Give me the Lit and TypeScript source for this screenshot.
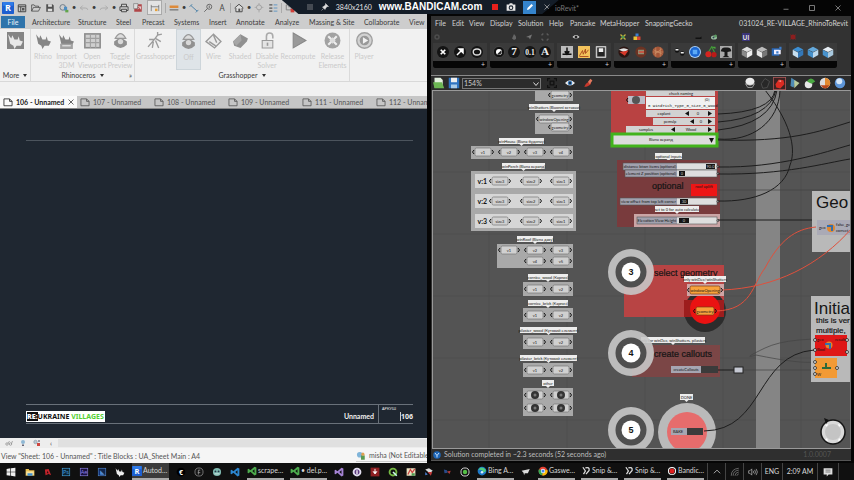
import { LitElement, html, svg, css } from "lit";
import { customElement } from "lit/decorators.js";

/* Icons are drawn on a 16 x 16 grid. */
const ball = (c: string, d = svg``) =>
  svg`<circle cx="8" cy="8" r="7.4" fill="#111" stroke="#555" stroke-width=".8"/><circle cx="8" cy="8" r="4" fill=${c}/>${d}`;
const chip = (bg: string, fg: string, label: string) =>
  svg`<rect x="2" y="2" width="12" height="12" fill=${bg} stroke=${fg}/><text x="8" y="11.5" font-size="9" text-anchor="middle" fill=${fg}>${label}</text>`;
const letter = (label: string, size = 13) =>
  svg`<circle cx="8" cy="8" r="8" fill="#161616"/><text x="8" y="12.5" font-size=${size} font-weight="bold" font-family="Liberation Serif, serif" text-anchor="middle" fill="#eee">${label}</text>`;
const cube = (top: string, l: string, r: string) =>
  svg`<path d="M8 1l7 3.5L8 8 1 4.500z" fill=${top}/><path d="M1 5l7 3.500V16l-7-4z" fill=${l}/><path d="M15 5L8 8.500V16l7-4z" fill=${r}/>`;
const doc = svg`<path d="M1.500 3h9l4 4v7h-13zM10.500 3v4h4" fill="none" stroke="currentColor" stroke-width="1.300"/>`;
const rhinoShape = svg`<path d="M1 2l3 4 1-3 2 4 3 0 1-3 1 4 3 1-2 4-4 0-2 3-1-3-3-2z" fill="currentColor"/>`;
const vs = (c: string) =>
  svg`<path d="M12 1l3 1.500v11L12 15 5.500 9.300 2.500 11.700 1 11V5l1.500-.7 3 2.400zM12 5L8.500 8 12 11z" fill=${c}/>`;

const I: Record<string, unknown> = {
  revit: svg`<rect width="16" height="16" rx="1" fill="#1d5fd0"/><path d="M1 0h14v5H1z" fill="#2f7be8"/><text x="8" y="12.500" font-size="12" font-weight="bold" text-anchor="middle" fill="#fff">R</text>`,
  panel: svg`<path d="M2 3h12v11H2zM2 6h12M6 6v8" fill="none" stroke="#444" stroke-width="1.600"/><path d="M8 8h4v4H8z" fill="#555"/>`,
  open: svg`<path d="M1 13V3h4l1.500 2H12v2M1 13l3-6h11l-3 6z" fill="none" stroke="#444" stroke-width="1.200"/>`,
  save: svg`<path d="M2 2h10l2 2v10H2z" fill="#505050"/><path d="M5 2h6v4H5zM4.500 9h7v4h-7z" fill="#ddd"/>`,
  sync: svg`<circle cx="6" cy="7" r="4.500" fill="none" stroke="#6d7b86" stroke-width="1.500"/><path d="M8 6h5v6H8z" fill="#4d8ec4"/><path d="M10 11h5v4h-5z" fill="#63a54c"/>`,
  undo: svg`<path d="M6 4L2 8l4 3M2 8h8q4 0 4 3" fill="none" stroke="#aaa" stroke-width="1.500"/>`,
  redo: svg`<path d="M10 4l4 4-4 3M14 8H6q-4 0-4 3" fill="none" stroke="#aaa" stroke-width="1.500"/>`,
  print: svg`<path d="M4 6V2h8v4M4 12H1.500V6h13v6H12M4 10h8v4H4z" fill="#cfcfcf" stroke="#444" stroke-width="1.500"/>`,
  pdf: svg`<path d="M2 2h12v12H2z" fill="#b04648"/><path d="M1 1h7l-1 8H1z" fill="#ddd" stroke="#777"/><path d="M8 10l4-4M12 10V6H8" stroke="#fff" fill="none"/>`,
  aligned: svg`<path d="M2 3v10M14 3v10M2 6h12" stroke="#555" fill="none"/><rect x="8" y="9" width="4" height="4" fill="#e6a13b"/>`,
  measure: svg`<rect x="1" y="4" width="14" height="4" fill="#dd8a3a"/><path d="M1 11h14" stroke="#555" stroke-width="1.500"/>`,
  diag: svg`<path d="M3 4l10 9M1 6l4-4M11 15l4-4" stroke="#4a80a8" stroke-width="1.500"/>`,
  tag: svg`<circle cx="10" cy="6" r="4" fill="none" stroke="#555" stroke-width="1.300"/><path d="M7 9l-5 5M10 4v4" stroke="#555" stroke-width="1.300"/>`,
  letterA: svg`<text x="8" y="13" font-size="13" text-anchor="middle" fill="#444">A</text>`,
  house: svg`<path d="M1 8l7-6 7 6M3 8v6h10V8" fill="#ddd" stroke="#444" stroke-width="1.500"/><path d="M7 9h3v5H7z" fill="#555"/>`,
  section: svg`<circle cx="8" cy="7" r="4" fill="none" stroke="#999" stroke-width="1.300"/><path d="M8 0v3M8 11v4M1 7h3M12 7h3" stroke="#999"/>`,
  list: svg`<path d="M2 3h5M2 8h5M2 13h5" stroke="#555" stroke-width="2"/><path d="M9 3h6M9 8h6M9 13h6" stroke="#4d8ec4" stroke-width="1.300"/>`,
  close3: svg`<path d="M2 3h8v8H2zM5 6h8v8" fill="none" stroke="#777" stroke-width="1.300"/><path d="M9 9h6v6H9z" fill="#d2403a"/>`,
  rhino: rhinoShape,
  more: svg`<rect width="16" height="16" fill="#858585"/><g color="#e8e8e8">${rhinoShape}</g>`,
  import3: svg`<g color="#858585">${rhinoShape}</g><path d="M2 11h12v5H2z" fill="#a2a2a2"/><path d="M4 13h8" stroke="#eee"/>`,
  viewport: svg`<rect x=".8" y="1.800" width="14.400" height="13" fill="#cfcfcf" stroke="#8d8d8d" stroke-width="1.500"/><path d="M6 2v13M11 2v13M1 6h14M1 10h14" stroke="#a0a0a0"/>`,
  toggle: svg`<path d="M3 6q5-9 10 0z" fill="#ddd" stroke="#999"/><path d="M2 9q6-6 12 0v3q-6 6-12 0z" fill="#909090"/><circle cx="8" cy="9" r="2.500" fill="#d8d8d8"/>`,
  hopper: svg`<path d="M1 14l6-7 3-4 4-1M7 7l-5 0M8 6l5 3M8 8l3 7M6 9l-1 6M10 3l0-3" stroke="#9c9c9c" stroke-width="1.300" fill="none"/>`,
  wire: svg`<path d="M1 9l7-7 7 7-6 6zM4 9l6 4M8 3l3 7" fill="#ececec" stroke="#999" stroke-width="1.300"/>`,
  shaded: svg`<path d="M1 9l7-7 7 4-1 3-6 6-6-2z" fill="#909090"/><path d="M1 9l7-7 1 6-5 5z" fill="#a6a6a6"/>`,
  lock: svg`<path d="M7 8V4q0-3 3-3t3 3v2" fill="none" stroke="#aaa" stroke-width="1.500"/><path d="M3 8h10v7H3z" fill="#e4e4e4" stroke="#999"/><path d="M8 10v3" stroke="#999" stroke-width="1.500"/>`,
  recompute: svg`<path d="M3 1l12 7-12 7z" fill="#999" stroke="#888"/>`,
  release: svg`<circle cx="8" cy="8" r="7.500" fill="#a2a2a2"/><path d="M4 4l8 8M12 4l-8 8" stroke="#eee" stroke-width="2"/><path d="M5 8l3-3 3 3-3 3z" fill="#ddd"/>`,
  player: svg`<circle cx="8" cy="8" r="7.300" fill="#d2d2d2" stroke="#a0a0a0" stroke-width="1.300"/><circle cx="8" cy="8" r="4.500" fill="#999"/><path d="M6.500 5l5 3-5 3z" fill="#f2f2f2"/>`,
  doc,
  glasses: svg`<circle cx="4" cy="10" r="2.500" fill="none" stroke="#666"/><circle cx="11" cy="10" r="2.500" fill="none" stroke="#666"/><path d="M6 9l3-5M13 9l2-5" stroke="#666"/>`,
  bulb: svg`<circle cx="8" cy="6" r="4" fill="#8fb8d4"/><path d="M6 11h4v3H6z" fill="#667"/>`,
  worksets: svg`<circle cx="5" cy="6" r="3.500" fill="#b9c8d2" stroke="#789"/><path d="M8 8h6v6H8z" fill="#cf4640"/><path d="M10 2h4v4h-4z" fill="#99a"/>`,
  userset: svg`<circle cx="6" cy="6" r="4.500" fill="#7fb4d9"/><path d="M8 7h6v7H8z" fill="#5a9a50"/><circle cx="11" cy="5" r="2.500" fill="#e0a050"/>`,
  gear: svg`<circle cx="8" cy="8" r="4" fill="none" stroke="#4c4c4c" stroke-width="3"/>`,
  flame: svg`<path d="M8 2l4 5v5l-4 2-4-3z" fill="#666"/>`,
  arrowUp: svg`<path d="M2 8l12-5-4 10-2-4z" fill="#777"/>`,
  frame: svg`<path d="M2 5V2h3M11 2h3v3M14 11v3h-3M5 14H2v-3" fill="none" stroke="#777" stroke-width="1.500"/>`,
  eye: svg`<path d="M1 8q7-8 14 0-7 7-14 0z" fill="#ddd"/><circle cx="8" cy="8" r="3" fill="#222"/>`,
  eyeBlue: svg`<path d="M0 8q8-9 16 0-8 8-16 0z" fill="#eee"/><circle cx="8" cy="8" r="3.600" fill="#3a78b8"/><circle cx="8" cy="8" r="1.500" fill="#111"/>`,
  bug: svg`<path d="M3 3l10 10M13 3L3 13" stroke="#c8b43c" stroke-width="2.500"/><circle cx="8" cy="8" r="3" fill="#4f9c52"/>`,
  blocks: svg`<path d="M5 1h6v6H5z" fill="#3c7ed0"/><path d="M1 7h7v7H1z" fill="#e8c236"/><path d="M8 7h7v7H8z" fill="#d64533"/>`,
  dash: svg`<path d="M1 9h9l3-2v5H1z" fill="#111"/>`,
  frog: svg`<ellipse cx="8" cy="9" rx="6" ry="4" fill="#9ec4a5"/><circle cx="11" cy="6" r="3" fill="#5d9a62"/><circle cx="7" cy="9" r="2" fill="#345"/>`,
  ui: svg`<rect width="16" height="16" fill="#3a3478"/><text x="8" y="13" font-size="13" font-weight="bold" text-anchor="middle" fill="#ddd">UI</text>`,
  redbug: svg`<circle cx="8" cy="8" r="5" fill="#8c1f1f"/><path d="M2 3l12 10M14 3L2 13" stroke="#8c1f1f" stroke-width="1.500"/>`,
  cross: svg`<circle cx="8" cy="8" r="8" fill="#141414"/><path d="M5 5l6 6M11 5l-6 6" stroke="#fff" stroke-width="2.300"/>`,
  slash: svg`<circle cx="8" cy="8" r="8" fill="#141414"/><path d="M4 12l5-5M7 4h5v5z" stroke="#fff" stroke-width="2" fill="#fff"/>`,
  ring: svg`<circle cx="8" cy="8" r="8" fill="#141414"/><ellipse cx="8" cy="8" rx="5" ry="4" fill="none" stroke="#ddd" stroke-width="1.800"/>`,
  yin: ball("#fff", svg`<path d="M11 5.500a4 4 0 01-5.500 5.500z" fill="#222"/>`),
  seven: letter("7", 15),
  digits: letter("0.1", 10),
  bigA: letter("A", 15),
  slider: svg`<rect width="16" height="16" fill="#bbb"/><path d="M2 11h12M8 2v8M5 7l3 4 3-4" stroke="#111" stroke-width="2" fill="#111"/>`,
  graph: svg`<rect width="16" height="16" fill="#f3c35c"/><path d="M2 13L6 6l1 5 3-7 0 6 4-5M2 14h12" stroke="#a8481c" stroke-width="1.200" fill="none"/>`,
  switch: svg`<rect x="1" width="14" height="16" rx="1" fill="#c4c4c4"/><rect x="3" y="2" width="10" height="12" fill="#222"/><rect x="5" y="3" width="6" height="5" fill="#eee"/>`,
  orb1: svg`<circle cx="8" cy="8" r="7.500" fill="#2a1512"/><path d="M1 5q7-4 13 0L8 8z" fill="#e2e2e2"/><path d="M2 8l12-2-5 7z" fill="#d8392a"/>`,
  orb2: svg`<circle cx="8" cy="8" r="7.500" fill="#6b3323"/><path d="M4 5h8v6H4z" fill="#8e8e72"/><path d="M5 7h7v2H5z" fill="#d6483a"/>`,
  orb3: svg`<circle cx="8" cy="8" r="7.500" fill="#a45638"/><path d="M2 5l12 6M3 11l10-7M5 2v12M11 2v12M1 8h14" stroke="#d9a274" stroke-width=".7"/>`,
  ant: svg`<circle cx="4" cy="6" r="3" fill="#111"/><circle cx="11" cy="10" r="3" fill="#111"/><path d="M2 5h4M9 9h4" stroke="#eee" stroke-width="2"/>`,
  blue: svg`<circle cx="8" cy="8" r="8" fill="#a9cdf4"/><circle cx="8" cy="8" r="6.700" fill="#1b66cf"/><path d="M5 5h6v6H5z" fill="#5caaf6"/>`,
  cherry: svg`<path d="M4 9l5-8 4 8" stroke="#3f9a35" stroke-width="1.500" fill="none"/><circle cx="4.500" cy="11" r="4" fill="#d6241f"/><circle cx="12" cy="11.500" r="3.500" fill="#bb1a18"/><path d="M8 1h6v3z" fill="#4aa83c"/>`,
  tree: svg`<rect width="16" height="16" fill="#aaa"/><path d="M1 7q1-6 7-5 7-1 7 5l-5 1v5l3 2H3l3-2V8z" fill="#1b1b1b"/>`,
  cubeG: cube("#ddd", "#8a8a8a", "#eee"),
  cubeH: cube("#bbb", "#e6e6e6", "#777"),
  plug: svg`<path d="M1 3h10v10H1z" fill="#2a67b6"/><path d="M4 5h9v6H4z" fill="#eef"/><path d="M7 7h3v3H7zM11 1h3v4h-3z" fill="#3d7ecc"/>`,
  cubeB: cube("#3c8fd4", "#c7dff0", "#3478b8"),
  cubeC: cube("#64a9dc", "#4590ca", "#bcd9ee"),
  cubeD: cube("#e7eef4", "#4892cd", "#a9c9df"),
  folder: svg`<path d="M2 1h8l3 3v10H2z" fill="#e4f1df"/><path d="M0 7h12l3 8H2z" fill="#6cb653"/>`,
  disk: svg`<path d="M1 1h14v14H1z" fill="#2f74c2"/><path d="M4 1h8v6H4z" fill="#eee"/><path d="M4 10h8v5H4z" fill="#a9cbe9"/>`,
  target: svg`<path d="M1 5V1h4M11 1h4v4M15 11v4h-4M5 15H1v-4M5 5h6v6H5z" fill="none" stroke="#111" stroke-width="2"/>`,
  pen: svg`<path d="M2 14q2-6 7-8l4 3q-4 5-11 5z" fill="#c8382c"/><path d="M8 6l4-5 3 3-4 6z" fill="#e0795f"/>`,
  pot: svg`<ellipse cx="8" cy="6" rx="6" ry="5" fill="#ececec"/><path d="M2 9q6 4 12 0l-3 5H5z" fill="#333" stroke="#bbb"/>`,
  dark: svg`<path d="M3 9l5-7 6 4-3 8-6 1z" fill="#272727" stroke="#555"/>`,
  gem: svg`<rect x=".5" y=".5" width="15" height="15" fill="#3c2222" stroke="#a55"/><path d="M3 9l4-6 6 1 1 5-5 5-5-1z" fill="#dc2b22"/><path d="M6 5l4-1 0 2z" fill="#f4a29a"/>`,
  spear: svg`<path d="M3 1l6 4-3 9-4-2z" fill="#4e8bb4"/><path d="M7 4l7 4-7 7z" fill="#b9cc9b"/>`,
  half: svg`<circle cx="6" cy="10" r="5" fill="#e6e6e6"/><path d="M4 6q5-8 11 0l-5 3z" fill="#4aa842"/>`,
  orange: svg`<circle cx="8" cy="8" r="7" fill="#dedede"/><path d="M8 1a7 7 0 010 14z" fill="#e28a2f"/><path d="M2 11h12l-4 4H6z" fill="#b8481c"/>`,
  sphere: svg`<circle cx="8" cy="8" r="7" fill="#5d95d8"/><circle cx="7" cy="5.500" r="4" fill="#d5e6f8"/>`,
  windows: svg`<path d="M1 3l6-1v5.500H1zM8 1.800L15 1v6.500H8zM1 8.500h6V14l-6-1zM8 8.500h7V15l-7-1z" fill="#eee"/>`,
  files: svg`<path d="M1 3h5l1 2h8v9H1z" fill="#e9bf4f"/><path d="M2 7h12v6H2z" fill="#f6e3a0"/><path d="M4 10h8v4H4z" fill="#4390cf"/>`,
  acad: svg`<path d="M3 4l6-1 4 10-4-2-5 2z" fill="#c3242c"/><path d="M7 6l2 4H6z" fill="#2a0d0d"/>`,
  ps: chip("#0b2333", "#45a4e0", "Ps"),
  ae: chip("#1a1040", "#8d84e8", "Ae"),
  lumion: chip("#10264e", "#4f86d0", "◣"),
  rhinoW: svg`<g color="#eee">${rhinoShape}</g>`,
  c4d: svg`<circle cx="8" cy="8" r="7" fill="#000"/><text x="8" y="12" font-size="11" font-weight="bold" text-anchor="middle" fill="#fff">€</text>`,
  obs: svg`<circle cx="8" cy="8" r="6.500" fill="#151515" stroke="#888" stroke-width="1.300"/><path d="M7 12V5h3M6 9h4" stroke="#999" fill="none" stroke-width="1.300"/>`,
  face: svg`<circle cx="8" cy="8" r="6.500" fill="#7fb9b0"/><circle cx="5.500" cy="7" r="1.500" fill="#234"/><circle cx="10.500" cy="7" r="1.500" fill="#234"/><path d="M4 11h8" stroke="#fff"/>`,
  code: vs("#2b86d0"),
  codeG: vs("#4dac4e"),
  vstudio: vs("#a583d4"),
  github: svg`<circle cx="8" cy="8" r="7" fill="#e2dff0"/><circle cx="8" cy="8" r="4" fill="#5d3c80"/><path d="M7 5h2v6H7z" fill="#fff"/>`,
  redbox: svg`<rect x="1" y="1" width="14" height="14" fill="#8e1f22"/><path d="M8 3v7M5 7l3 4 3-4" stroke="#fff" stroke-width="1.500" fill="#fff"/>`,
  qgis: svg`<circle cx="8" cy="8" r="5.500" fill="none" stroke="#75b843" stroke-width="3"/><path d="M8 8l6 6" stroke="#cfe" stroke-width="2.500"/>`,
  maps: svg`<path d="M1 2h14v12H1z" fill="#e9e2c0"/><path d="M3 12l4-8 3 5 4-6" stroke="#c44" stroke-width="2" fill="none"/><path d="M9 10h5v4H9z" fill="#4d9a50"/>`,
  mix: svg`<path d="M2 4l6-2 6 4-5 4z" fill="#ddd"/><path d="M6 8l7 0-2 6z" fill="#c43a3a"/><path d="M2 8l4 4-4 1z" fill="#4b7fd2"/>`,
  mix2: svg`<path d="M3 4l5 1 1 4-5 1z" fill="#284a8a"/><path d="M8 7l6-1-2 5z" fill="#b23a3a"/>`,
  greenOrb: svg`<circle cx="8" cy="8" r="6.500" fill="#111" stroke="#ddd" stroke-width="1.500"/><circle cx="8" cy="8" r="3.500" fill="#55c146"/>`,
  edge: svg`<circle cx="8" cy="8" r="7" fill="#1c78c8"/><path d="M2 6q5-7 12 0 1 5-5 4 1-5-7-4z" fill="#4fcf7d"/><circle cx="8" cy="10" r="2" fill="#d7eaff"/>`,
  hopperW: svg`<path d="M1 6l13-3-3 7-5 0-1 3-1-4z" fill="#ddd"/>`,
  chrome: svg`<circle cx="8" cy="8" r="7" fill="#e34133"/><path d="M8 8L1.500 5A7 7 0 007 15z" fill="#35a852"/><path d="M8 8l7-2a7 7 0 01-8 9z" fill="#f8bd0c"/><circle cx="8" cy="8" r="3.500" fill="#fff"/><circle cx="8" cy="8" r="2.500" fill="#4084f0"/>`,
  snip: svg`<path d="M3 2l4 6-3 5M7 3q7-2 6 4l-5 6" stroke="#ddd" stroke-width="2" fill="none"/>`,
  rec: svg`<circle cx="8" cy="8" r="6.500" fill="#fff"/><circle cx="8" cy="8" r="5" fill="#222"/><circle cx="8" cy="8" r="4" fill="#e01f1f"/>`,
  chevUp: svg`<path d="M3 10l5-5 5 5" fill="none" stroke="#ccc" stroke-width="1.300"/>`,
  wifi: svg`<path d="M2 14Q2 3 14 2M5 14q0-8 9-9M8 14q0-5 6-6M11 14q0-2 3-3" fill="none" stroke="#777" stroke-width="1.300"/>`,
  volume: svg`<path d="M1 6h2l3-3v10l-3-3H1z" fill="none" stroke="#ccc"/><path d="M8 6q2 2 0 4M10.500 4.500q3 3.500 0 7M13 3q4 5 0 10" fill="none" stroke="#ccc"/>`,
  note: svg`<path d="M1 2h14v10H9l-3 3v-3H1z" fill="#ddd"/><path d="M4 5h8M4 8h8" stroke="#444"/>`,
  menu: svg`<path d="M2 4h12M2 8h12M2 12h12" stroke="#aaa" stroke-width="1.300"/>`,
  pin: svg`<path d="M9 1l6 6-3 0-3 4-1 2-5-5 2-1 4-3zM5 11l-4 4" fill="#ddd" stroke="#ddd"/>`,
  stop: svg`<rect x="2" y="2" width="12" height="12" fill="#e8201c"/>`,
  camera: svg`<path d="M1 4h4l1-2h4l1 2h4v10H1z" fill="#e8e8e8"/><circle cx="8" cy="9" r="3.700" fill="#1a2430"/><circle cx="8" cy="9" r="2" fill="#e8e8e8"/>`,
  pencil: svg`<path d="M2 14l1-4 8-8 3 3-8 8z" fill="#fff"/>`,
  x: svg`<path d="M3 3l10 10M13 3L3 13" stroke="currentColor" stroke-width="1.400"/>`,
  min: svg`<path d="M4 10h8" stroke="#888" stroke-width="1.400"/>`,
  max: svg`<path d="M4 4h8v8H4z" fill="none" stroke="#888" stroke-width="1.400"/>`,
  closeWin: svg`<path d="M4 4l8 8M12 4l-8 8" stroke="#888" stroke-width="1.400"/>`,
  hopBlue: svg`<circle cx="8" cy="8" r="7.500" fill="#1d66b8"/><path d="M4 4l4 5 4-5M8 9v4" stroke="#d9ecff" stroke-width="1.800" fill="none"/>`,
};
const icon = (name: string, size = "s10") =>
  html`<svg class="ic ${size}" viewBox="0 0 16 16" aria-hidden="true">${I[name]}</svg>`;

const base = css`
  * { box-sizing: border-box; }
  button, select, input { font: inherit; color: inherit; background: none; border: 0; padding: 0; margin: 0; }
  button { display: flex; align-items: center; justify-content: center; white-space: nowrap; }
  a { color: inherit; text-decoration: none; }
  .ic { display: block; flex: none; font-family: "Open Sans", sans-serif; }
  .s8 { width: 8px; height: 8px; }
  .s10 { width: 10px; height: 10px; }
  .s12 { width: 12px; height: 12px; }
  .s13 { width: 13px; height: 13px; }
  .s18 { width: 17px; height: 17px; }
`;

@customElement("revit-window")
class RevitWindow extends LitElement {
  static styles = [base, css`
    :host { display: flex; flex-direction: column; min-width: 0; overflow: hidden; background: #f1f1f1; color: #3c3c3c; font: 7px/9px Lato, "Noto Sans", sans-serif; white-space: nowrap; }
    .qat { display: flex; align-items: center; height: 15px; padding-left: 1px; background: #cdcdcd; }
    .qat button { width: 14px; height: 15px; flex: none; }
    .qat .dot { width: 6px; font-size: 8px; }
    .qat .boxed { width: 15px; margin: 0 2px; background: #e3e3e3; border: 1px solid #aaa; }
    .sep { width: 1px; height: 10px; margin: 0 1px; background: #aaa; }
    nav { display: flex; height: 14px; padding-left: 1px; background: #cdcdcd; align-items: center; }
    nav button { flex: none; height: 14px; justify-content: flex-start; }
    nav .file { background: #2f74ab; color: #e8f2fa; width: 24px; height: 12px; justify-content: center; margin-right: 7px; }
    .ribbon { display: flex; height: 53px; border-bottom: 1px solid #d8d8d8; background: #f1f1f1; }
    .group { display: flex; flex-direction: column; border-right: 1px solid #dadada; flex: none; }
    .group:last-child { border: 0; }
    .tools { display: flex; flex: 1; }
    .tools button { flex-direction: column; justify-content: flex-start; padding-top: 3px; gap: 3px; line-height: 9px; color: #cacaca; height: 41px; }
    .tools button .ic { color: #858585; }
    .tools .on { background: #dfe4e8; border: 1px solid #cdd5da; }
    .foot { display: flex; justify-content: center; height: 13px; align-items: center; position: relative; gap: 4px; }
    .foot i { border: 2px solid transparent; border-top: 3px solid #333; border-bottom: 0; }
    .more { position: absolute; right: 2px; }
    .blank { height: 14px; }
    .docs { display: flex; height: 13px; background: #c6c6c6; overflow: hidden; border-bottom: 1px solid #888; }
    .docs button { width: 74px; flex: none; justify-content: flex-start; padding-left: 3px; gap: 3px; color: #555; }
    .docs .on { width: 77px; background: #fafafa; color: #222; font-weight: 700; }
    .docs .x { margin-left: auto; margin-right: 2px; }
    .sheet { flex: 1; background: #1f2731; display: flex; flex-direction: column; padding: 31px 14px 14px 26px; color: #eee; }
    .top { border-top: 1px solid #4c545d; flex: 1; }
    .title { border-top: 1px solid #69717a; border-bottom: 1px solid #69717a; display: flex; height: 20px; align-items: flex-end; font-family: "Noto Sans", sans-serif; }
    .logo { background: #fff; color: #111; font-weight: 700; height: 11px; line-height: 11px; padding: 0 1px; margin-bottom: 1px; }
    .logo b { background: #111; color: #fff; }
    .logo em { font-style: normal; color: #55cf35; }
    .name { margin-left: auto; font-family: Lato, sans-serif; font-weight: 700; padding: 0 4px 2px; }
    .num { border-left: 1px solid #69717a; width: 35px; align-self: stretch; display: flex; flex-direction: column; padding-left: 3px; }
    .num small { font-size: 4px; line-height: 7px; }
    .num b { align-self: flex-end; border-left: 1px solid #ccc; }
    .view { display: flex; height: 10px; align-items: center; background: #ededed; padding-left: 2px; }
    .view button { width: 14px; }
    .view span { flex: 1; height: 8px; background: #e0e0e0; }
    .status { display: flex; height: 15px; align-items: center; padding: 2px 0 0 1px; background: #f5f5f5; color: #555; }
    .user { display: flex; gap: 3px; width: 71px; margin-left: auto; overflow: hidden; border-bottom: 1px solid #ccc; flex: none; }
  `];
  tool(name: string, w: number, lines: string[], on = false) {
    return html`<button class=${on ? "on" : ""} style="width:${w}px">${icon(name, "s18")}<span>${lines.map((l, i) => (i ? html`<br />${l}` : l))}</span></button>`;
  }
  render() {
    const q = ["revit", "panel", "open", "save", "sync", ".", "undo", ".", "redo", ".", "print", "pdf", "#aligned", "|", "measure", ".", "diag", "tag", "letterA", "|", "house", ".", "section", "list", "|", "close3"];
    const tabs: [string, number][] = [["Architecture", 46], ["Structure", 38], ["Steel", 26], ["Precast", 32], ["Systems", 35], ["Insert", 27], ["Annotate", 39], ["Analyze", 34], ["Massing & Site", 55], ["Collaborate", 45], ["View", 20]];
    return html`
      <div class="qat">${q.map((n) => n === "." ? html`<button class="dot" aria-label="Options">•</button>` : n === "|" ? html`<span class="sep"></span>` : html`<button class=${n[0] === "#" ? "boxed" : ""} aria-label=${n}>${icon(n.replace("#", ""), n === "revit" ? "s12" : "s10")}</button>`)}</div>
      <nav><button class="file">File</button>${tabs.map(([t, w]) => html`<button style="width:${w}px">${t}</button>`)}</nav>
      <div class="ribbon">
        <div class="group"><div class="tools">${this.tool("more", 30, [])}</div><div class="foot">More <i></i></div></div>
        <div class="group"><div class="tools">${this.tool("rhino", 24, ["Rhino"])}${this.tool("import3", 23, ["Import", "3DM"])}${this.tool("viewport", 28, ["Open", "Viewport"])}${this.tool("toggle", 28, ["Toggle", "Preview"])}</div><div class="foot">Rhinoceros <i></i><span class="more">»</span></div></div>
        <div class="group"><div class="tools">${this.tool("hopper", 41, ["Grasshopper"])}${this.tool("toggle", 25, ["Off"], true)}${this.tool("wire", 25, ["Wire"])}${this.tool("shaded", 28, ["Shaded"])}${this.tool("lock", 26, ["Disable", "Solver"])}${this.tool("recompute", 36, ["Recompute"])}${this.tool("release", 33, ["Release", "Elements"])}</div><div class="foot">Grasshopper <i></i></div></div>
        <div class="group"><div class="tools">${this.tool("player", 28, ["Player"])}</div></div>
      </div>
      <div class="blank"></div>
      <div class="docs">${["106", "107", "108", "109", "111", "112"].map((n, i) => html`<button class=${i ? "" : "on"}>${icon("doc")}${n} - Unnamed${i ? "" : html`<span class="x">${icon("x", "s8")}</span>`}</button>`)}</div>
      <div class="sheet">
        <div class="top"></div>
        <div class="title"><span class="logo"><b>RE:</b>UKRAINE <em>VILLAGES</em></span><span class="name">Unnamed</span><span class="num"><small>АРКУШ</small><b>106</b></span></div>
      </div>
      <div class="view">${["glasses", "bulb", "worksets"].map((n) => html`<button aria-label=${n}>${icon(n, "s8")}</button>`)}<button aria-label="Scroll left">‹</button><span></span></div>
      <div class="status">View "Sheet: 106 - Unnamed" : Title Blocks : UA_Sheet Main : A4<span class="user">${icon("userset")}misha (Not Editable</span></div>`;
  }
}

/* ---- node canvas ---- */
const pill = (cx: number, y: number, label: string, w = 20, orange = false) => svg`
  <rect x=${cx - w / 2 + 2} y=${y - 4} width=${w - 4} height="8" rx="1.500" fill=${orange ? "#f7a23c" : "#d0d0d0"} stroke=${orange ? "#7a3a10" : "#777"} stroke-width=".7"/>
  <path d="M${cx - w / 2 + 1} ${y - 2}l-1.500 2 1.500 2M${cx + w / 2 - 1} ${y - 2}l1.500 2-1.500 2" fill="none" stroke="#111"/>
  ${label === "●" ? svg`<circle cx=${cx} cy=${y} r="4" fill="#333"/><circle cx=${cx} cy=${y} r="1.500" fill="#777"/>` : svg`<text x=${cx} y=${y + 1.5} class="t4 mid">${label}</text>`}`;
const box = (x: number, y: number, x2: number, y2: number, f = "#a9a9a9") =>
  svg`<rect x=${x} y=${y} width=${x2 - x} height=${y2 - y} fill=${f}/>`;
const note = (x: number, y: number, x2: number, label: string) => svg`
  <path d="M${x} ${y}H${x2}V${y + 6}H${(x + x2) / 2 + 2}l-2 2-2-2H${x}z" fill="#ededed"/>
  <text x=${(x + x2) / 2} y=${y + 4.500} class="t4 mid">${label}</text>`;
const slider = (x: number, y: number, split: number, x2: number, label: string, v1: number, v2: number, val: string) => svg`
  ${box(x, y, split, y + 7, "#a1a1ae")}${box(split, y, x2, y + 7, "#dedede")}
  <rect x=${x} y=${y} width=${x2 - x} height="7" fill="none" stroke="#555" stroke-width=".6"/>
  ${box(v1, y + 1, v2, y + 6, "#151515")}
  <text x=${(x + split) / 2} y=${y + 5} class="t4 mid">${label}</text><text x=${(v1 + v2) / 2} y=${y + 5} class="t4 mid pale">${val}</text>
  <circle cx=${x2 + 1} cy=${y + 3.500} r="1" fill="#ddd" stroke="#111" stroke-width=".6"/>`;
const stepper = (x: number, y: number, name: string, nx: number, ax: number, val: string, vx: number) => svg`
  ${box(x, y, 715, y + 7, "#d2d2d2")}<text x=${nx} y=${y + 5} class="t4 mid">${name}</text>
  <path d="M${ax + 2} ${y + 1}v5l-4-2.500zM708 ${y + 1}v5l4-2.500z" fill="#111"/><text x=${vx} y=${y + 5} class="t4 mid">${val}</text>`;
const step = (y: number, n: string) => svg`
  <circle cx="631" cy=${y} r="19" fill="none" stroke="#c8c8c8" stroke-opacity=".9" stroke-width="8"/>
  <circle cx="631" cy=${y} r="15.500" fill="#4f4f4f"/><circle cx="631" cy=${y} r="9.500" fill="#fff"/>
  <text x="631" y=${y + 3} class="n mid">${n}</text>`;

@customElement("node-canvas")
class NodeCanvas extends LitElement {
  static styles = [base, css`
    :host { display: block; position: relative; overflow: hidden; background: #545454; border: 1px solid #999; border-right-color: #777; }
    .world { position: absolute; inset: 0; width: 100%; height: 100%; font-family: Lato, "Liberation Sans", sans-serif; }
    text { fill: #151515; }
    .mid { text-anchor: middle; }
    text.pale { fill: #ccc; }
    .t4 { font-size: 4px; }
    .mono { font: 4px "Liberation Mono", monospace; }
    .v { font-size: 7px; font-weight: 700; text-anchor: end; }
    .n { font: bold 9px "Liberation Sans", sans-serif; }
    .h { font: 9px "Liberation Sans", sans-serif; stroke: #151515; stroke-width: .2px; }
    .h17 { font: 17px "Liberation Sans", sans-serif; }
    .h9 { font: 8px "Liberation Sans", sans-serif; stroke: #151515; stroke-width: .2px; }
    .wire { fill: none; stroke: #1d1d1d; stroke-width: 1; }
    .red { fill: none; stroke: #e0503c; stroke-width: 1; }
    .faint { fill: none; stroke: #444; stroke-width: .7; }
    select { position: absolute; left: 181px; top: 45px; width: 94px; height: 8px; appearance: none; background: #dcdcdc; color: #151515; font: 4px/8px Lato, "Liberation Sans", sans-serif; text-align-last: center; }
  `];
  render() {
    const grid = [0, 1, 2, 3, 4, 5];
    return html`<svg class="world" role="img" aria-label="Definition canvas"><g transform="translate(-433 -91)">
      ${grid.map((i) => svg`<path d="M${489 + i * 78} 90v360M432 ${110 + i * 62}h420" stroke="#4f4f4f" stroke-width="1"/>`)}
      ${box(756, 90, 780, 449, "#858585")}
      ${box(535, 88, 573, 101)}${pill(560, 95, "geometry", 22)}
      ${note(529, 104, 579, "winShatters (Віконні вставки)")}${box(535, 113, 573, 134)}${pill(554, 119, "windowOpening", 34)}${pill(560, 127, "geometry", 22)}
      ${note(499, 138, 544, "winHouse (Вікна будинку)")}${box(471, 146, 573, 159)}${[483, 509, 535, 561].map((x, i) => pill(x, 152, "v" + (i + 1)))}
      ${note(502, 163, 545, "winPorch (Вікна веранд)")}${box(471, 171, 576, 231)}
      ${[0, 1, 2].map((i) => svg`${box(475, 174 + i * 20, 573, 188 + i * 20, "#d6d6d6")}<text x="487" y=${184 + i * 20} class="v">v:${i + 1}</text>${["size3", "size2", "size1"].map((s, k) => pill([500, 531, 561][k], 181 + i * 20, s))}`)}
      ${note(517, 236, 553, "winRoof (Вікна даху)")}${box(497, 244, 573, 268)}${pill(509, 250, "v1")}${pill(535, 250, "v2")}${pill(561, 250, "v3")}${pill(535, 261, "v4")}${pill(561, 261, "v5")}
      ${([[528, 274, 568, "cornice_wood (Карниз)"], [528, 300, 568, "cornice_brick (Карниз)"], [520, 327, 577, "pilaster_wood (Кутовий елемент)"], [520, 355, 577, "pilaster_brick (Кутовий елемент)"]] as [number, number, number, string][]).map(([a, y, b, l]) => svg`${note(a, y, b, l)}${box(523, y + 8, 573, y + 22)}${pill(535, y + 15, "v1")}${pill(561, y + 15, "v2")}`)}
      ${note(542, 380, 554, "other")}${box(523, 388, 573, 416)}${[395, 408].map((y) => svg`${pill(535, y, "●")}${pill(561, y, "●")}`)}

      ${box(611, 90, 718, 146, "#b94242")}
      <path class="faint" d="M850 340Q790 336 765 348T756 355Q800 364 815 362"/>
      ${box(628, 96, 645, 104, "#bcbcc6")}<circle cx="636" cy="100" r="4" fill="#555"/><path d="M628 98l-1.500 2 1.500 2" fill="none" stroke="#111"/>
      ${box(646, 91, 715, 96, "#cfcfcf")}<text x="681" y="95" class="t4 mid">check naming</text>
      ${box(646, 97, 715, 109, "#f1f1f1")}<text x="707" y="101" class="t4 mid">{0}</text><text x="648" y="107" class="mono">0 windTich_Type_0_Size_0_Wood</text>
      ${stepper(646, 110, "explant", 664, 687, "0", 698)}${stepper(653, 118, "pcmslp", 670, 692, "0", 701)}${stepper(626, 126, "samples", 646, 673, "Wood", 691)}
      <rect x="612" y="134" width="105" height="12" fill="#dcdcdc" stroke="#42b31c" stroke-width="3"/><path d="M709 138h5l-2.500 5z" fill="#111"/>
      ${note(655, 153, 682, "optional inputs")}${box(617, 160, 720, 227, "#793b3d")}
      ${slider(623, 163, 677, 717, "distance btwn items (optional)", 706, 715, "90.0")}${slider(625, 170, 677, 717, "element Z position (optional)", 679, 685, "0")}
      <text x="652" y="189" class="h">optional</text>${box(691, 184, 717, 196, "#ee1515")}<text x="704" y="188" class="t4 mid">roof uplift</text>
      ${slider(620, 198, 677, 717, "view offset from top left corner", 680, 688, "30")}${box(634, 214, 720, 227, "#caa5a6")}${note(655, 206, 699, "set to 0 for auto calculate")}
      ${slider(637, 217, 677, 717, "Elevation View Height", 679, 689, "0")}
      <path class="wire" d="M718 114Q772 112 775 90M718 122Q770 118 776 90M718 130Q772 124 777 90M718 139C752 142 779 122 780 90M718 140C790 142 818 132 850 122M718 167C780 168 825 152 850 145M718 174C785 175 825 163 850 159M765 90C795 128 795 153 790 165C785 190 755 202 718 201M718 220H817"/>
      <path class="faint" d="M718 190H850M744 370H815"/>

      ${box(812, 191, 852, 252, "#b9b9b9")}<text x="816" y="208" class="h17">Geo</text>
      ${box(817, 220, 852, 235, "#aaaab6")}<text x="819" y="229" class="t4">geo</text><circle cx="831" cy="228" r="4" fill="#e2872c"/><path d="M827 226h5v5" stroke="#326fb0" stroke-width="2" fill="none"/><text x="836" y="226" class="t4">false_geo</text><text x="836" y="232" class="t4">correct_geo</text>
      ${box(624, 265, 724, 317, "#b84444")}${step(272, "3")}
      <circle cx="705" cy="311" r="21" fill="#2c2c2c"/><path d="M684 300h40v17h-40z" fill="#9d1d1d"/><circle cx="705" cy="309" r="15" fill="#ea1212"/>
      <text x="654" y="276" class="h">select geometry</text>${box(687, 284, 724, 296, "#cfa5a5")}${note(684, 276, 726, "only winDec/winShatters")}
      <path class="red" d="M722 290C775 288 820 265 852 228M716 311C752 310 752 285 765 268C780 240 795 229 816 227"/>
      ${pill(705, 290, "windowOpening", 34, true)}${pill(705, 311, "geometry", 22, true)}
      ${box(632, 345, 720, 377, "#7b4646")}${note(641, 337, 705, "only for winDec, winShatters, pilasters")}${step(353, "4")}
      <text x="654" y="357" class="h">create callouts</text>
      ${box(671, 366, 701, 373, "#a6a6b2")}${box(701, 366, 718, 373, "#3b3b3b")}<text x="686" y="371" class="t4 mid">createCallouts</text><path class="wire" d="M718 370h16"/><rect x="734" y="367" width="9" height="6" fill="#c5c8d2" stroke="#222"/>
      ${step(430, "5")}<circle cx="687" cy="432" r="29" fill="#bababa"/><circle cx="687" cy="432" r="20" fill="#e66c6c"/>${note(680, 394, 693, "DONE")}
      ${box(671, 428, 687, 435, "#a6a6b2")}${box(687, 428, 703, 435, "#3b3b3b")}<text x="678" y="433" class="t4 mid">BAKE</text>

      ${box(811, 296, 852, 382, "#b9b9b9")}<text x="814" y="314" class="h17">Initial</text><text x="816" y="323" class="h9">this is very</text><text x="816" y="333" class="h9">multiple,</text>
      ${box(815, 335, 847, 356, "#df1717")}<circle cx="829" cy="345" r="3.500" fill="#e2872c"/><path d="M825 344h5v5" stroke="#326fb0" stroke-width="2" fill="none"/>
      ${box(815, 358, 837, 378, "#f29a35")}<path d="M822 368h9M826 363v6" stroke="#2e6a3a" stroke-width="2"/><text x="817" y="341" class="t4">geo</text><text x="817" y="351" class="t4">Bool</text><text x="835" y="341" class="t4">result</text><text x="817" y="376" class="t4">W</text>
      ${[[815, 340], [815, 350], [847, 340], [847, 352], [815, 362], [815, 368], [815, 374], [837, 368]].map(([x, y]) => svg`<circle cx=${x} cy=${y} r="1.500" fill="#ddd" stroke="#111" stroke-width=".7"/>`)}
      <path class="wire" d="M704 431C765 430 755 355 814 350"/>
      <circle cx="833" cy="432" r="12" fill="#d9d9d9" stroke="#151515" stroke-width="1.500"/><circle cx="833" cy="432" r="8" fill="#c4c4c4"/><path d="M825 425l3-1-1 3zM841 425l-3-1 1 3zM825 440l3 1-1-3zM841 440l-3 1 1-3z" fill="#fff"/><path d="M824 418l5 2-3 4z" fill="#111"/>
    </g></svg>
    <select aria-label="Element type"><option>Вікна веранд</option></select>`;
  }
}

@customElement("grasshopper-window")
class GrasshopperWindow extends LitElement {
  static styles = [base, css`
    :host { display: flex; flex-direction: column; min-width: 0; overflow: hidden; background: #323232; color: #d2d2d2; font: 7px/9px Lato, "Noto Sans", sans-serif; white-space: nowrap; border: solid #050505; border-width: 0 3px 2px 4px; }
    .bar { display: flex; align-items: center; height: 16px; background: #050505; justify-content: flex-end; color: #777; gap: 16px; padding-right: 8px; }
    .bar span { margin-right: auto; padding-left: 124px; }
    .menu { display: flex; height: 15px; align-items: center; padding: 0 3px 0 4px; }
    .menu .file { margin-left: auto; }
    .mini { display: flex; height: 12px; align-items: center; padding-left: 2px; }
    .mini button { flex: none; justify-content: flex-start; }
    .ribbon { display: flex; gap: 3px; height: 25px; padding-left: 2px; }
    .group { flex: none; display: flex; flex-direction: column; background: #3a3a3a; }
    .tools { display: flex; flex: 1; align-items: center; justify-content: space-around; padding: 0 1px; }
    .foot { height: 7px; background: #060606; border-radius: 0 0 2px 2px; justify-content: flex-end; padding-right: 2px; line-height: 7px; }
    .gap { height: 7px; }
    .zoom { display: flex; align-items: center; height: 15px; border-top: 1px solid #8a8a8a; background: #2b2b2b; padding: 0 4px 0 0; }
    .zoom button { width: 15px; }
    .zoom .far { margin-left: auto; }
    .zoom .eye { width: 18px; }
    .zoom select { width: 79px; height: 11px; border: 1px solid #777; color: #ccc; appearance: none; padding-left: 1px; }
    .combo { position: relative; display: flex; margin: 0 2px 0 1px; }
    .combo .arrow { position: absolute; right: 1px; top: 2px; pointer-events: none; }
    node-canvas { flex: 1; margin: 0 0 0 1px; }
    .status { display: flex; height: 12px; align-items: center; gap: 3px; padding: 0 20px 0 2px; background: #2f2f2f; color: #bdbdbd; border-bottom: 1px solid #555; }
    .ver { margin-left: auto; color: #555; }
  `];
  render() {
    const menu: [string, number][] = [["File", 17], ["Edit", 17], ["View", 21], ["Display", 28], ["Solution", 31], ["Help", 21], ["Pancake", 30], ["MetaHopper", 45], ["SnappingGecko", 50]];
    const mini: [string, number][] = [["gear", 77], ["flame", 15], ["arrowUp", 16], ["frame", 31], ["eye", 47], ["bug", 14], ["blocks", 62], ["dash", 15], ["frog", 32], ["ui", 47], ["redbug", 15]];
    const groups: [number, string[]][] = [[54, ["cross", "slash", "ring"]], [64, ["yin", "seven", "digits", "bigA"]], [54, ["slider", "graph", "switch"]], [54, ["orb1", "orb2", "orb3"]], [64, ["ant", "blue", "cherry", "tree"]], [48, ["cubeG", "cubeH", "plug"]], [48, ["cubeB", "cubeC", "cubeD"]]];
    return html`
      <div class="bar"><span>ioRevit*</span>${["min", "max", "closeWin"].map((n) => html`<button aria-label=${n}>${icon(n)}</button>`)}</div>
      <div class="menu">${menu.map(([m, w]) => html`<button style="width:${w}px;justify-content:flex-start">${m}</button>`)}<span class="file">031024_RE-VILLAGE_RhinoToRevit</span></div>
      <div class="mini">${mini.map(([n, w]) => html`<button style="width:${w}px" aria-label=${n}>${icon(n, "s8")}</button>`)}</div>
      <div class="ribbon">${groups.map(([w, g], i) => html`<div class="group" style="width:${w}px"><div class="tools">${g.map((n) => html`<button aria-label=${n}>${icon(n, "s12")}</button>`)}</div><button class="foot" aria-label="More components">${i < 6 ? "+" : ""}</button></div>`)}</div>
      <div class="gap"></div>
      <div class="zoom"><button aria-label="Open">${icon("folder", "s12")}</button><button aria-label="Save">${icon("disk", "s12")}</button>
        <span class="combo"><select aria-label="Zoom"><option>154%</option></select><svg class="ic s8 arrow" viewBox="0 0 16 16"><path d="M3 5l5 6 5-6" fill="none" stroke="#ddd" stroke-width="2"/></svg></span>
        ${["target", "eyeBlue", "pen"].map((n) => html`<button class="eye" aria-label=${n}>${icon(n)}</button>`)}
        ${["pot", "dark", "gem", "spear", "half", "orange", "sphere"].map((n, i) => html`<button class=${i ? "" : "far"} aria-label=${n}>${icon(n, n === "gem" ? "s13" : "s12")}</button>`)}</div>
      <node-canvas></node-canvas>
      <div class="status">${icon("hopBlue", "s8")}Solution completed in ~2.3 seconds (52 seconds ago)<span class="ver">1.0.0007</span></div>`;
  }
}

@customElement("task-bar")
class TaskBar extends LitElement {
  static styles = [base, css`
    :host { display: flex; height: 17px; background: #101010; color: #d8d8d8; font: 7px/9px Lato, "Noto Sans", sans-serif; overflow: hidden; padding-left: 1px; }
    button { flex: none; width: 18px; height: 17px; gap: 1px; }
    button:first-of-type { width: 20px; }
    .app { width: 37px; border-bottom: 2px solid #aaa; margin: 0 3px; justify-content: flex-start; }
    .lit { background: #3b3b3b; }
    .tray { display: flex; margin-left: auto; padding-right: 14px; }
    .tray button, .tray button:first-of-type { border-left: 1px solid #444; width: 18px; }
    .tray .wide { width: 35px; }
    .tray .mid { width: 21px; }
    .tray .end { width: 5px; }
  `];
  render() {
    const b = (n: string) => html`<button aria-label=${n}>${icon(n)}</button>`;
    const app = (n: string, t: string, lit = false) => html`<button class="app ${lit ? "lit" : ""}">${icon(n)}${t}</button>`;
    return html`${["windows", "files", "acad", "ps", "ae", "lumion", "rhinoW"].map(b)}${app("revit", "Autod…", true)}${["c4d", "obs", "face", "code"].map(b)}${app("codeG", "scrape…")}${app("codeG", "• del.p…")}${["vstudio", "github", "redbox", "qgis", "maps", "mix", "mix2", "greenOrb"].map(b)}${app("edge", "Bing A…")}${b("hopperW")}${app("chrome", "Gaswe…")}${app("snip", "Snip &…")}${app("snip", "Snip &…")}${app("rec", "Bandic…")}
      <div class="tray">${b("chevUp")}${b("wifi")}${b("volume")}<button class="mid">ENG</button><button class="wide">2:09 AM</button><button class="mid" aria-label="Notifications">${icon("note")}</button><button class="end" aria-label="Show desktop"></button></div>`;
  }
}

@customElement("app-root")
class AppRoot extends LitElement {
  static styles = [base, css`
    :host { display: flex; flex-direction: column; min-height: 100vh; position: relative; background: #050505; overflow: hidden; }
    .desk { flex: 1; display: grid; grid-template-columns: minmax(0, 1fr) minmax(0, 1fr); }
    .rec { position: absolute; top: 0; left: 33%; width: 277px; height: 14px; display: flex; align-items: center; gap: 7px; padding-left: 24px; background: #141d28; color: #e4e4e4; font: 7px/9px Lato, sans-serif; clip-path: polygon(0 0, 100% 0, 94% 100%, 6% 100%); }
    .brand { font: bold 10px/12px "Liberation Sans", sans-serif; color: #fff; margin-right: 2px; }
    .edit { background: #3584cc; width: 13px; height: 13px; }
    .rec .ic { color: #bbb; }
  `];
  render() {
    return html`<div class="desk"><revit-window></revit-window><grasshopper-window></grasshopper-window></div>
      <task-bar></task-bar>
      <div class="rec"><button aria-label="Menu">${icon("menu", "s8")}</button><button aria-label="Pin">${icon("pin", "s8")}</button>3840x2160<a class="brand" href="#">www.BANDICAM.com</a><button aria-label="Stop">${icon("stop", "s8")}</button><button aria-label="Screenshot">${icon("camera")}</button><button class="edit" aria-label="Draw">${icon("pencil", "s8")}</button><button aria-label="Close">${icon("x", "s8")}</button></div>`;
  }
}
